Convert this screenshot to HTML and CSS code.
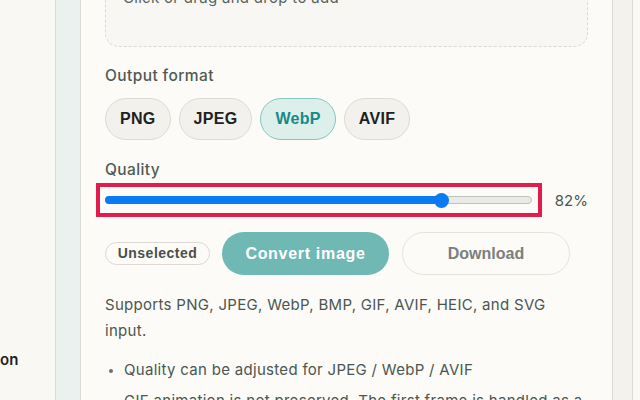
FILE: index.html
```html
<!DOCTYPE html>
<html>
    <head>
        <title>Image Converter</title>
        <link rel="stylesheet" href="styles.css">
    </head>
    <body>
        <div class="side">
            <div class="nav-item">on</div>
        </div>
        <div class="rail"></div>
        <div class="main">
            <div class="dropzone">Click or drag and drop to add</div>

            <div class="label">Output format</div>
            <div class="formats">
                <button class="pill">PNG</button>
                <button class="pill">JPEG</button>
                <button class="pill active">WebP</button>
                <button class="pill">AVIF</button>
            </div>

            <div class="label quality-label">Quality</div>
            <div class="quality">
                <div class="slider">
                    <div class="track">
                        <div class="fill" style="width: 79%"></div>
                        <b class="thumb" style="left: 79%"></b>
                    </div>
                </div>
                <span class="value">82%</span>
            </div>

            <div class="actions">
                <span class="badge">Unselected</span>
                <button class="btn primary">Convert image</button>
                <button class="btn ghost">Download</button>
            </div>

            <p class="note">Supports PNG, JPEG, WebP, BMP, GIF, AVIF, HEIC, and SVG input.</p>
            <ul class="tips">
                <li>Quality can be adjusted for JPEG / WebP / AVIF</li>
                <li>GIF animation is not preserved. The first frame is handled as a still image.</li>
            </ul>
        </div>
        <div class="scrollbar"></div>
        <div class="edge"></div>
    </body>
</html>
```

FILE: styles.css
```css
body {
    margin: 0;
    height: 400px;
    overflow: hidden;
    display: flex;
    font-family: Inter, "Liberation Sans", sans-serif;
    color: #4b5651;
    background: #faf9f5;
}
    .side {
        width: 55px;
        flex: none;
        background: #faf8f3;
        border-right: 1px solid #dcdcd5;
    }
    .nav-item {
        padding-top: 349px;
        font-size: 15px;
        font-weight: 600;
        line-height: 22px;
        color: #1f2321;
    }
    .rail {
        width: 24px;
        flex: none;
        background: #e9f2ef;
        border-right: 1px solid #dadbd3;
    }
    .main {
        width: 483px;
        flex: none;
        padding: 0 24px;
        background: #fcfbf7;
    }
    .dropzone {
        margin-top: -60px;
        height: 58px;
        padding: 47px 0 0 17px;
        border: 1px dashed #dcd9d2;
        border-radius: 14px;
        background: #f8f7f3;
        font-size: 15px;
        line-height: 20px;
        letter-spacing: 0.3px;
        color: #5a635e;
    }
    .label {
        margin-top: 18px;
        font-size: 15.5px;
        font-weight: 500;
        line-height: 22px;
        letter-spacing: 0.4px;
        color: #4f5a55;
    }
    .formats {
        display: flex;
        gap: 8px;
        margin-top: 11px;
    }
    .pill {
        height: 42px;
        padding: 0 14px;
        border: 1px solid #dedbd3;
        border-radius: 21px;
        background: #f2f1ed;
        font-family: "Liberation Sans", Arial, sans-serif;
        font-size: 16px;
        font-weight: bold;
        letter-spacing: 0.3px;
        color: #1d2220;
    }
    .pill.active {
        background: #ddefea;
        border-color: #86c6c2;
        color: #17898a;
    }
    .quality-label {
        margin-top: 19px;
    }
    .quality {
        display: flex;
        align-items: center;
        gap: 23px;
        margin-top: 2px;
        height: 34px;
    }
    .slider {
        position: relative;
        width: 428px;
        height: 34px;
        display: flex;
        align-items: center;
    }
    .slider:after {
        position: absolute;
        content: '';
        left: -9px;
        right: -10px;
        top: 0;
        bottom: 0;
        border: 4px solid #e01d4b;
    }
    .track {
        position: relative;
        width: 100%;
        height: 8px;
        box-sizing: border-box;
        border: 1px solid #bfc2bd;
        border-radius: 4px;
        background: #e9e9e5;
    }
    .fill {
        position: absolute;
        left: -1px;
        top: -1px;
        bottom: -1px;
        background: #0b7bf4;
        border-radius: 4px 0 0 4px;
    }
    .thumb {
        position: absolute;
        top: 50%;
        width: 15px;
        height: 15px;
        margin: -7.5px 0 0 -7.5px;
        border-radius: 50%;
        background: #0b7bf4;
    }
    .value {
        font-size: 15px;
        color: #4c5651;
    }
    .actions {
        display: flex;
        align-items: center;
        margin-top: 15px;
        height: 43px;
    }
    .badge {
        box-sizing: border-box;
        width: 105px;
        height: 23px;
        line-height: 21px;
        text-align: center;
        border: 1px solid #dcd9d2;
        border-radius: 12px;
        font-family: "Liberation Sans", Arial, sans-serif;
        font-size: 14px;
        font-weight: bold;
        letter-spacing: 0.5px;
        color: #4a4f4c;
    }
    .btn {
        width: 167px;
        height: 43px;
        border-radius: 22px;
        font-family: "Liberation Sans", Arial, sans-serif;
        font-size: 16px;
        font-weight: bold;
    }
    .btn.primary {
        margin-left: 12px;
        border: none;
        background: #70b8b4;
        color: #fff;
        letter-spacing: 0.7px;
    }
    .btn.ghost {
        margin-left: 13px;
        width: 168px;
        border: 1px solid #e6e3dc;
        background: #fcfbf7;
        color: #7b807c;
    }
    .note {
        margin: 17px 0 0;
        font-size: 15px;
        line-height: 26px;
        letter-spacing: 0.3px;
    }
    .tips {
        margin: 13px 0 0;
        padding-left: 19px;
        font-size: 15px;
        line-height: 26px;
        letter-spacing: 0.3px;
    }
    .tips li {
        margin-bottom: 5px;
    }
    .tips li::marker {
        font-size: 12px;
        color: #6b736f;
    }
    .scrollbar {
        width: 19px;
        flex: none;
        background: #f3f2ee;
        border-left: 1px solid #dcdad3;
        border-right: 1px solid #dcdad3;
    }
    .edge {
        flex: 1;
        background: #faf9f5;
    }
```
